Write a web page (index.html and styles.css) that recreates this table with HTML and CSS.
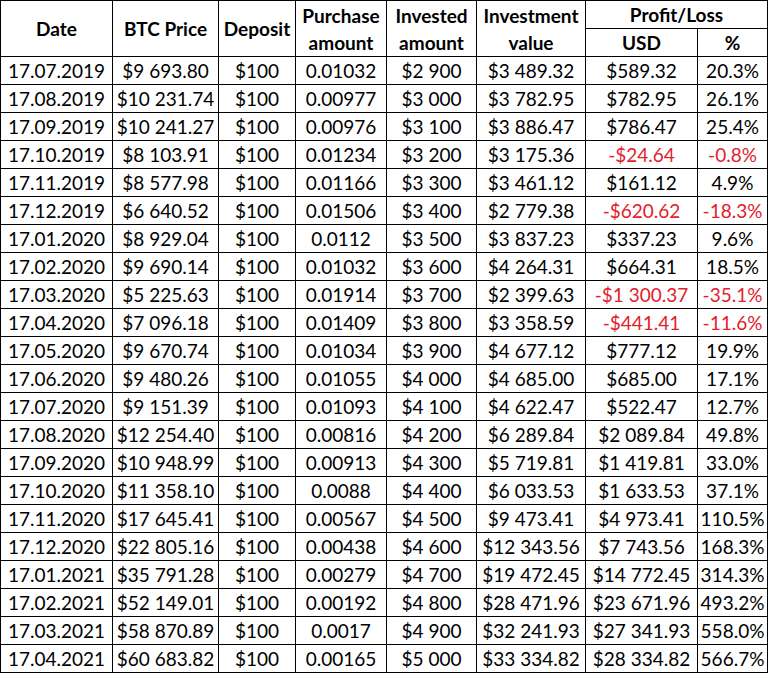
FILE: index.html
```html
<!DOCTYPE html>
<html>
<head>
<meta charset="utf-8">
<link rel="stylesheet" href="styles.css">
</head>
<body>
<table class="grid">
<colgroup>
<col class="c-date"><col class="c-btc"><col class="c-dep"><col class="c-pur"><col class="c-inv"><col class="c-val"><col class="c-usd"><col class="c-pct">
</colgroup>
<thead>
<tr><th rowspan="2">Date</th><th rowspan="2">BTC Price</th><th rowspan="2">Deposit</th><th rowspan="2" class="two">Purchase<br>amount</th><th rowspan="2" class="two">Invested<br>amount</th><th rowspan="2" class="two">Investment<br>value</th><th colspan="2">Profit/Loss</th></tr>
<tr><th>USD</th><th>%</th></tr>
</thead>
<tbody>
<tr><td>17.07.2019</td><td>$9 693.80</td><td>$100</td><td>0.01032</td><td>$2 900</td><td>$3 489.32</td><td>$589.32</td><td>20.3%</td></tr>
<tr><td>17.08.2019</td><td>$10 231.74</td><td>$100</td><td>0.00977</td><td>$3 000</td><td>$3 782.95</td><td>$782.95</td><td>26.1%</td></tr>
<tr><td>17.09.2019</td><td>$10 241.27</td><td>$100</td><td>0.00976</td><td>$3 100</td><td>$3 886.47</td><td>$786.47</td><td>25.4%</td></tr>
<tr><td>17.10.2019</td><td>$8 103.91</td><td>$100</td><td>0.01234</td><td>$3 200</td><td>$3 175.36</td><td class="neg">-$24.64</td><td class="neg">-0.8%</td></tr>
<tr><td>17.11.2019</td><td>$8 577.98</td><td>$100</td><td>0.01166</td><td>$3 300</td><td>$3 461.12</td><td>$161.12</td><td>4.9%</td></tr>
<tr><td>17.12.2019</td><td>$6 640.52</td><td>$100</td><td>0.01506</td><td>$3 400</td><td>$2 779.38</td><td class="neg">-$620.62</td><td class="neg">-18.3%</td></tr>
<tr><td>17.01.2020</td><td>$8 929.04</td><td>$100</td><td>0.0112</td><td>$3 500</td><td>$3 837.23</td><td>$337.23</td><td>9.6%</td></tr>
<tr><td>17.02.2020</td><td>$9 690.14</td><td>$100</td><td>0.01032</td><td>$3 600</td><td>$4 264.31</td><td>$664.31</td><td>18.5%</td></tr>
<tr><td>17.03.2020</td><td>$5 225.63</td><td>$100</td><td>0.01914</td><td>$3 700</td><td>$2 399.63</td><td class="neg">-$1 300.37</td><td class="neg">-35.1%</td></tr>
<tr><td>17.04.2020</td><td>$7 096.18</td><td>$100</td><td>0.01409</td><td>$3 800</td><td>$3 358.59</td><td class="neg">-$441.41</td><td class="neg">-11.6%</td></tr>
<tr><td>17.05.2020</td><td>$9 670.74</td><td>$100</td><td>0.01034</td><td>$3 900</td><td>$4 677.12</td><td>$777.12</td><td>19.9%</td></tr>
<tr><td>17.06.2020</td><td>$9 480.26</td><td>$100</td><td>0.01055</td><td>$4 000</td><td>$4 685.00</td><td>$685.00</td><td>17.1%</td></tr>
<tr><td>17.07.2020</td><td>$9 151.39</td><td>$100</td><td>0.01093</td><td>$4 100</td><td>$4 622.47</td><td>$522.47</td><td>12.7%</td></tr>
<tr><td>17.08.2020</td><td>$12 254.40</td><td>$100</td><td>0.00816</td><td>$4 200</td><td>$6 289.84</td><td>$2 089.84</td><td>49.8%</td></tr>
<tr><td>17.09.2020</td><td>$10 948.99</td><td>$100</td><td>0.00913</td><td>$4 300</td><td>$5 719.81</td><td>$1 419.81</td><td>33.0%</td></tr>
<tr><td>17.10.2020</td><td>$11 358.10</td><td>$100</td><td>0.0088</td><td>$4 400</td><td>$6 033.53</td><td>$1 633.53</td><td>37.1%</td></tr>
<tr><td>17.11.2020</td><td>$17 645.41</td><td>$100</td><td>0.00567</td><td>$4 500</td><td>$9 473.41</td><td>$4 973.41</td><td>110.5%</td></tr>
<tr><td>17.12.2020</td><td>$22 805.16</td><td>$100</td><td>0.00438</td><td>$4 600</td><td>$12 343.56</td><td>$7 743.56</td><td>168.3%</td></tr>
<tr><td>17.01.2021</td><td>$35 791.28</td><td>$100</td><td>0.00279</td><td>$4 700</td><td>$19 472.45</td><td>$14 772.45</td><td>314.3%</td></tr>
<tr><td>17.02.2021</td><td>$52 149.01</td><td>$100</td><td>0.00192</td><td>$4 800</td><td>$28 471.96</td><td>$23 671.96</td><td>493.2%</td></tr>
<tr><td>17.03.2021</td><td>$58 870.89</td><td>$100</td><td>0.0017</td><td>$4 900</td><td>$32 241.93</td><td>$27 341.93</td><td>558.0%</td></tr>
<tr><td>17.04.2021</td><td>$60 683.82</td><td>$100</td><td>0.00165</td><td>$5 000</td><td>$33 334.82</td><td>$28 334.82</td><td>566.7%</td></tr>
</tbody>
</table>
</body>
</html>
```
FILE: styles.css
```css
html, body {
  margin: 0;
  padding: 0;
  background: #ffffff;
}
body {
  font-family: Lato, "Open Sans", "Liberation Sans", sans-serif;
  color: #000;
}
.grid {
  border-collapse: collapse;
  table-layout: fixed;
  width: 767px;
  margin: 0;
  font-size: 19px;
}
.c-date { width: 112px; }
.c-btc { width: 106px; }
.c-dep { width: 77px; }
.c-pur { width: 91px; }
.c-inv { width: 90px; }
.c-val { width: 109px; }
.c-usd { width: 112px; }
.c-pct { width: 70px; }
.grid th,
.grid td {
  border: 1px solid #000;
  padding: 0;
  text-align: center;
  vertical-align: middle;
  white-space: nowrap;
  height: 27px;
  line-height: 27px;
}
.grid th {
  font-weight: 700;
}
.neg {
  color: #e3202b;
}
```
